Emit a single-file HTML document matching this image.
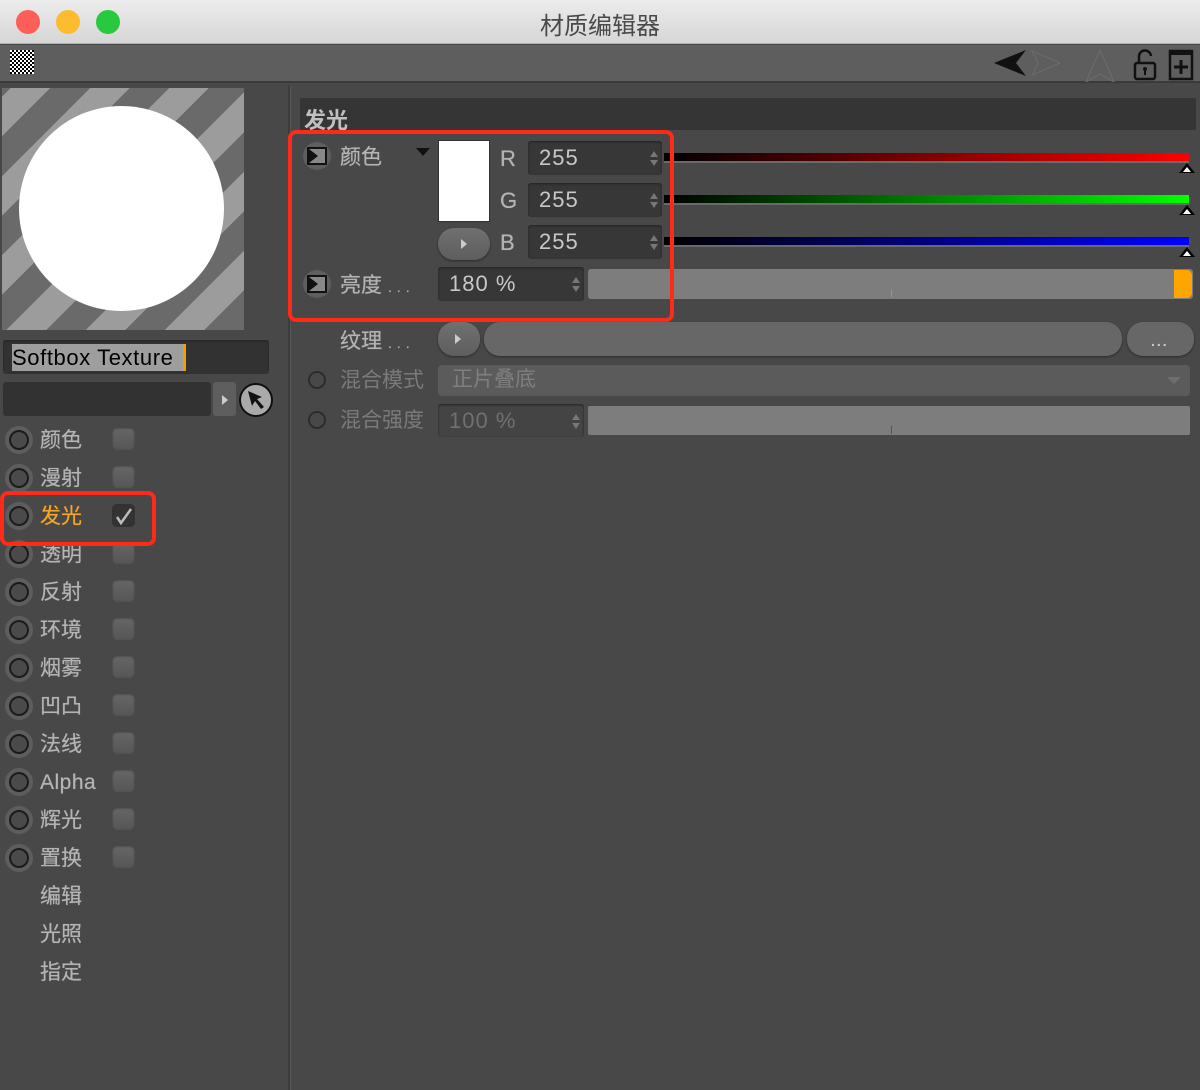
<!DOCTYPE html>
<html><head><meta charset="utf-8"><style>
*{margin:0;padding:0;box-sizing:border-box}
body{width:1200px;height:1090px;background:#484848;position:relative;overflow:hidden;font-family:"Liberation Sans","Noto Sans CJK SC",sans-serif;color:#b4b4b4}
.a{position:absolute}
.t{font-size:21px;line-height:24px;text-shadow:0 0 0.6px #b4b4b4}
.radio{position:absolute;width:28px;height:28px;border-radius:50%;border:4px solid #5d5d5d;background:#4a4a4a;box-shadow:inset 0 0 0 2px #1a1a1a}
.cb{position:absolute;width:23px;height:23px;border-radius:5px;background:linear-gradient(#666,#555);box-shadow:inset 0 0 2px #333}
.field{position:absolute;background:#373737;border-radius:3px;box-shadow:inset 0 1px 2px #222;color:#c8c8c8;font-size:22px;line-height:34px;padding-left:11px;letter-spacing:1px}
.spin{position:absolute;right:4px;top:10px;width:0;height:0;border-left:4px solid transparent;border-right:4px solid transparent;border-bottom:6px solid #777}
.spin2{position:absolute;right:4px;top:19px;width:0;height:0;border-left:4px solid transparent;border-right:4px solid transparent;border-top:6px solid #777}
.bar{position:absolute;height:10px;border-bottom:2px solid #6a6a6a}
.tri{position:absolute;width:0;height:0;border-left:8px solid transparent;border-right:8px solid transparent;border-bottom:10px solid #000}
.tri:after{content:"";position:absolute;left:-4px;top:4px;border-left:4px solid transparent;border-right:4px solid transparent;border-bottom:5px solid #fff}
.btn{position:absolute;background:linear-gradient(#707070,#5e5e5e);border-radius:16px;box-shadow:0 1px 2px #2a2a2a}
.play{position:absolute;width:0;height:0;border-top:5px solid transparent;border-bottom:5px solid transparent;border-left:6px solid #ccc}
.red{position:absolute;border:4px solid #ff2a1a;border-radius:8px}
.ibox{position:absolute;width:28px;height:28px;border-radius:50%;background:#5e5e5e}
.ibox i{position:absolute;left:4px;top:5px;width:20px;height:18px;border:2px solid #111;background:#888}
.ibox i:after{content:"";position:absolute;left:0;top:0;border-top:7px solid transparent;border-bottom:7px solid transparent;border-left:9px solid #111}
.dots{font-size:14px;letter-spacing:5px;margin-left:6px}
</style></head><body>
<div class="a" style="left:0;top:0;width:1200px;height:44px;background:linear-gradient(#ececec,#d6d6d6);border-bottom:1px solid #b0b0b0"></div>
<div class="a" style="left:16px;top:10px;width:24px;height:24px;border-radius:50%;background:#fc5f57"></div>
<div class="a" style="left:56px;top:10px;width:24px;height:24px;border-radius:50%;background:#fdbc2e"></div>
<div class="a" style="left:96px;top:10px;width:24px;height:24px;border-radius:50%;background:#28c83f"></div>
<div class="a" style="left:0;top:6px;width:1200px;text-align:center;font-size:24px;color:#4a4a4a">材质编辑器</div>
<div class="a" style="left:0;top:45px;width:1200px;height:38px;background:#5e5e5e;border-bottom:2px solid #3a3a3a"></div>
<div class="a" style="left:10px;top:50px;width:24px;height:24px;background:repeating-conic-gradient(#000 0 25%,#fff 0 50%) 0 0/4px 4px"></div>
<svg class="a" style="left:990px;top:46px" width="210" height="36">
<path d="M4 17 L36 4 L26 17 L36 30 Z" fill="#111"/>
<path d="M42 5 L70 17 L42 29 L48 17 Z" fill="none" stroke="#6c6c6c"/>
<path d="M110 4 L124 36 L110 28 L96 36 Z" fill="none" stroke="#6c6c6c"/>
<rect x="145" y="17" width="20" height="16" rx="2" fill="none" stroke="#111" stroke-width="2.5"/>
<path d="M149 17 V11 A6 6 0 0 1 161 10" fill="none" stroke="#111" stroke-width="2.5"/>
<circle cx="155" cy="23" r="2" fill="#111"/><rect x="154" y="23" width="2" height="6" fill="#111"/>
<rect x="180" y="5" width="22" height="28" fill="none" stroke="#111" stroke-width="2.5"/>
<rect x="180" y="5" width="22" height="4" fill="#111"/>
<path d="M191 14 V28 M184 21 H198" stroke="#111" stroke-width="3"/>
</svg>
<div class="a" style="left:288px;top:85px;width:3px;height:1005px;background:#3c3c3c;border-right:1px solid #555"></div>
<div class="a" style="left:2px;top:88px;width:242px;height:242px;overflow:hidden;background:repeating-linear-gradient(-45deg,#6a6a6a 0 28px,#9c9c9c 28px 56px)"></div>
<div class="a" style="left:19px;top:106px;width:205px;height:205px;border-radius:50%;background:#fff"></div>
<div class="a" style="left:3px;top:340px;width:266px;height:34px;background:#323232;border-radius:3px;box-shadow:inset 0 1px 2px #222"></div>
<div class="a" style="left:12px;top:344px;width:174px;height:27px;background:#9e9e9e;color:#000;font-size:22px;line-height:27px;letter-spacing:0.6px;border-right:3px solid #f5a000;white-space:nowrap;overflow:hidden">Softbox Texture</div>
<div class="a" style="left:3px;top:382px;width:208px;height:34px;background:#323232;border-radius:3px"></div>
<div class="a" style="left:213px;top:382px;width:23px;height:34px;background:#5e5e5e;border-radius:3px"></div>
<div class="play" style="left:222px;top:395px"></div>
<div class="a" style="left:239px;top:383px;width:34px;height:34px;border-radius:50%;background:#aaa;border:2px solid #111"></div>
<svg class="a" style="left:246px;top:389px" width="22" height="22"><path d="M2 2 L16 8 L11 10 L18 18 L15 20 L9 12 L6 17 Z" fill="#111"/></svg>

<div class="radio" style="left:5px;top:426px"></div><div class="a t" style="left:40px;top:429px">颜色</div><div class="cb" style="left:112px;top:428px"></div>
<div class="radio" style="left:5px;top:464px"></div><div class="a t" style="left:40px;top:467px">漫射</div><div class="cb" style="left:112px;top:466px"></div>
<div class="radio" style="left:5px;top:502px"></div><div class="a t" style="left:40px;top:505px;color:#f5a623;text-shadow:0 0 0.6px #f5a623">发光</div><div class="cb" style="left:112px;top:504px;background:#333"></div>
<svg class="a" style="left:113px;top:506px" width="22" height="20"><path d="M4 11 L8 17 L18 3" fill="none" stroke="#bbb" stroke-width="2.5"/></svg>
<div class="radio" style="left:5px;top:540px"></div><div class="a t" style="left:40px;top:543px">透明</div><div class="cb" style="left:112px;top:542px"></div>
<div class="radio" style="left:5px;top:578px"></div><div class="a t" style="left:40px;top:581px">反射</div><div class="cb" style="left:112px;top:580px"></div>
<div class="radio" style="left:5px;top:616px"></div><div class="a t" style="left:40px;top:619px">环境</div><div class="cb" style="left:112px;top:618px"></div>
<div class="radio" style="left:5px;top:654px"></div><div class="a t" style="left:40px;top:657px">烟雾</div><div class="cb" style="left:112px;top:656px"></div>
<div class="radio" style="left:5px;top:692px"></div><div class="a t" style="left:40px;top:695px">凹凸</div><div class="cb" style="left:112px;top:694px"></div>
<div class="radio" style="left:5px;top:730px"></div><div class="a t" style="left:40px;top:733px">法线</div><div class="cb" style="left:112px;top:732px"></div>
<div class="radio" style="left:5px;top:768px"></div><div class="a t" style="left:40px;top:771px;letter-spacing:0.5px">Alpha</div><div class="cb" style="left:112px;top:770px"></div>
<div class="radio" style="left:5px;top:806px"></div><div class="a t" style="left:40px;top:809px">辉光</div><div class="cb" style="left:112px;top:808px"></div>
<div class="radio" style="left:5px;top:844px"></div><div class="a t" style="left:40px;top:847px">置换</div><div class="cb" style="left:112px;top:846px"></div>
<div class="a t" style="left:40px;top:885px">编辑</div>
<div class="a t" style="left:40px;top:923px">光照</div>
<div class="a t" style="left:40px;top:961px">指定</div>
<div class="red" style="left:0;top:491px;width:156px;height:55px"></div>

<div class="a" style="left:300px;top:98px;width:896px;height:32px;background:#353535"></div>
<div class="a" style="left:304px;top:103px;font-size:22px;font-weight:bold;color:#c0c0c0">发光</div>

<div class="ibox" style="left:303px;top:142px"><i></i></div>
<div class="a t" style="left:340px;top:146px">颜色</div>
<div class="a" style="left:416px;top:148px;border-left:7px solid transparent;border-right:7px solid transparent;border-top:8px solid #111"></div>
<div class="a" style="left:438px;top:140px;width:52px;height:82px;background:#fff;border:1px solid #333"></div>
<div class="btn" style="left:438px;top:228px;width:52px;height:32px"></div><div class="play" style="left:461px;top:239px"></div>
<div class="a t" style="left:500px;top:147px;font-size:22px">R</div>
<div class="a t" style="left:500px;top:189px;font-size:22px">G</div>
<div class="a t" style="left:500px;top:231px;font-size:22px">B</div>
<div class="field" style="left:528px;top:141px;width:134px;height:34px">255<i class="spin"></i><i class="spin2"></i></div>
<div class="field" style="left:528px;top:183px;width:134px;height:34px">255<i class="spin"></i><i class="spin2"></i></div>
<div class="field" style="left:528px;top:225px;width:134px;height:34px">255<i class="spin"></i><i class="spin2"></i></div>
<div class="bar" style="left:664px;top:153px;width:525px;background:linear-gradient(90deg,#000,#ff0000)"></div>
<div class="bar" style="left:664px;top:195px;width:525px;background:linear-gradient(90deg,#000,#00ff00)"></div>
<div class="bar" style="left:664px;top:237px;width:525px;background:linear-gradient(90deg,#000,#0000ff)"></div>
<div class="tri" style="left:1179px;top:163px"></div>
<div class="tri" style="left:1179px;top:205px"></div>
<div class="tri" style="left:1179px;top:247px"></div>

<div class="ibox" style="left:303px;top:270px"><i></i></div>
<div class="a t" style="left:340px;top:274px">亮度<span class="dots">...</span></div>
<div class="field" style="left:438px;top:267px;width:146px;height:34px">180 %<i class="spin"></i><i class="spin2"></i></div>
<div class="a" style="left:588px;top:269px;width:605px;height:30px;background:#7d7d7d;border-radius:3px"></div>
<div class="a" style="left:1174px;top:270px;width:18px;height:28px;background:#ffa500;border-radius:0 5px 5px 0"></div>
<div class="a" style="left:891px;top:290px;width:1px;height:7px;background:#c8902a"></div>
<div class="red" style="left:288px;top:130px;width:386px;height:192px"></div>

<div class="a t" style="left:340px;top:330px">纹理<span class="dots">...</span></div>
<div class="btn" style="left:438px;top:322px;width:42px;height:34px"></div><div class="play" style="left:455px;top:334px"></div>
<div class="btn" style="left:484px;top:322px;width:638px;height:34px;background:#676767"></div>
<div class="btn" style="left:1127px;top:322px;width:67px;height:34px;background:#676767"></div>
<div class="a" style="left:1151px;top:333px;color:#ccc;font-size:14px;letter-spacing:2px;font-weight:bold">...</div>

<div class="a" style="left:308px;top:371px;width:18px;height:18px;border-radius:50%;border:2px solid #2c2c2c"></div>
<div class="a t" style="left:340px;top:369px;color:#7a7a7a;text-shadow:none">混合模式</div>
<div class="a" style="left:438px;top:365px;width:752px;height:31px;background:#5b5b5b;border-radius:4px"></div>
<div class="a t" style="left:452px;top:368px;color:#7f7f7f;text-shadow:none">正片叠底</div>
<div class="a" style="left:1167px;top:377px;border-left:7px solid transparent;border-right:7px solid transparent;border-top:7px solid #6e6e6e"></div>

<div class="a" style="left:308px;top:411px;width:18px;height:18px;border-radius:50%;border:2px solid #2c2c2c"></div>
<div class="a t" style="left:340px;top:409px;color:#7a7a7a;text-shadow:none">混合强度</div>
<div class="field" style="left:438px;top:404px;width:146px;height:33px;background:#444;color:#707070">100 %<i class="spin"></i><i class="spin2"></i></div>
<div class="a" style="left:588px;top:406px;width:602px;height:29px;background:#7d7d7d;border-radius:2px"></div>
<div class="a" style="left:891px;top:426px;width:1px;height:8px;background:#555"></div>
</body></html>
